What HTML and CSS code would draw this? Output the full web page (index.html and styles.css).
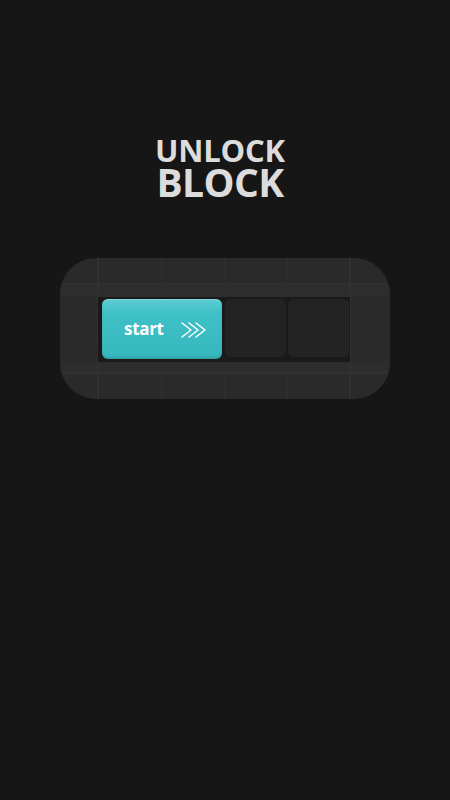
FILE: index.html
```html
<!DOCTYPE html>
<html>
<head>
<meta charset="utf-8">
<link rel="stylesheet" href="styles.css">
</head>
<body>
<div class="screen">
  <h1 class="title">
    <span class="line1">UNLOCK</span>
    <span class="line2">BLOCK</span>
  </h1>
  <div class="board">
    <div class="track">
      <div class="start">
        <span class="start-label">start</span>
        <svg class="chev" width="30" height="18" viewBox="0 0 30 18">
          <g fill="none" stroke="#ffffff" stroke-width="1.5" stroke-linecap="round" stroke-linejoin="round">
            <path d="M3 2 L12 9 L3 16"/>
            <path d="M10 2 L19 9 L10 16"/>
            <path d="M17 2 L26 9 L17 16"/>
          </g>
        </svg>
      </div>
      <div class="cell"></div>
      <div class="cell"></div>
    </div>
  </div>
</div>
</body>
</html>
```
FILE: styles.css
```css
html, body {
  margin: 0;
  padding: 0;
  background: #161616;
}
.screen {
  width: 450px;
  height: 800px;
  display: flex;
  flex-direction: column;
  align-items: center;
  background: #161616;
}
.title {
  margin: 136px 0 0 -10px;
  display: flex;
  flex-direction: column;
  align-items: center;
  font-family: "Open Sans", sans-serif;
  font-weight: 700;
  color: #dcdcdc;
}
.line1 {
  font-size: 31px;
  line-height: 28px;
  letter-spacing: -0.2px;
}
.line2 {
  font-size: 39px;
  line-height: 36px;
  letter-spacing: -0.6px;
}
.board {
  margin-top: 58px;
  width: 330px;
  height: 141px;
  box-sizing: border-box;
  border-radius: 36px;
  padding: 39px 0 0 38px;
  background-color: #2a2a2a;
  background-image:
    linear-gradient(to right, transparent 37px, #313131 37px, #313131 39px, transparent 39px),
    linear-gradient(to right, transparent 101px, #2e2e2e 101px, #2e2e2e 103px, transparent 103px),
    linear-gradient(to right, transparent 164px, #2e2e2e 164px, #2e2e2e 166px, transparent 166px),
    linear-gradient(to right, transparent 226px, #2e2e2e 226px, #2e2e2e 228px, transparent 228px),
    linear-gradient(to right, transparent 289px, #313131 289px, #313131 291px, transparent 291px),
    linear-gradient(to bottom, transparent 25px, #303030 25px, #303030 27px, #2d2d2d 27px, #2d2d2d 39px, transparent 39px),
    linear-gradient(to bottom, transparent 104px, #2d2d2d 104px, #2d2d2d 114px, #303030 114px, #303030 116px, transparent 116px);
}
.track {
  width: 252px;
  height: 65px;
  box-sizing: border-box;
  padding: 2px 1px 0 4px;
  background: #1a1a1a;
  display: flex;
  gap: 2px;
}
.start {
  width: 120px;
  height: 60px;
  margin-right: 1px;
  border-radius: 6px;
  background: linear-gradient(to bottom, #5ccdd3 0%, #3fbfc6 25%, #36b6bd 100%);
  box-shadow: inset 0 -2px 2px rgba(0,0,0,0.12), inset 0 1px 1px rgba(255,255,255,0.25);
  display: flex;
  align-items: center;
  box-sizing: border-box;
  padding-left: 22px;
}
.start-label {
  font-family: "Open Sans", sans-serif;
  font-weight: 700;
  font-size: 17px;
  color: #ffffff;
  letter-spacing: -0.3px;
  margin-top: -2px;
}
.chev {
  margin-left: 15px;
  margin-top: 1px;
}
.cell {
  width: 61px;
  height: 58px;
  border-radius: 6px;
  background: #232323;
}
```
